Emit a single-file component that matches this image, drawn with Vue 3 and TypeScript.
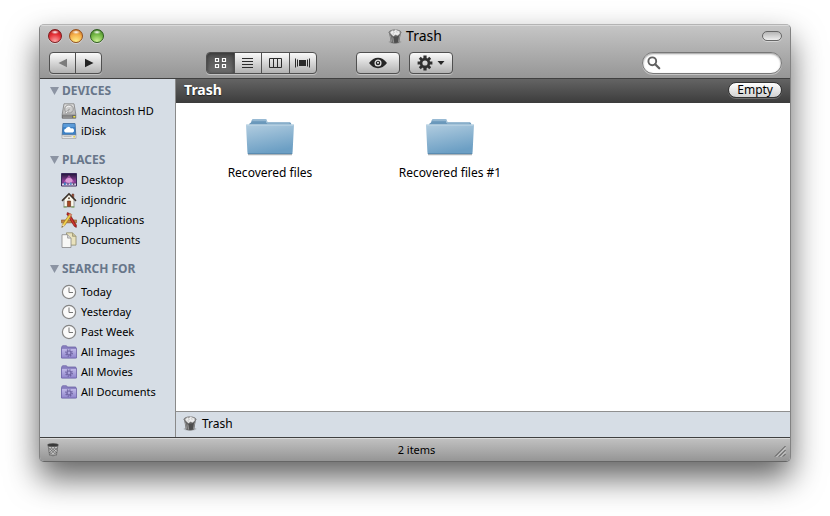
<script setup lang="ts">
import { computed, ref } from 'vue'

type IconName = 'drive' | 'idisk' | 'desktop' | 'home' | 'apps' | 'docs' | 'clock' | 'smart'

interface Place {
  label: string
  icon: IconName
}

interface Section {
  title: string
  spaced?: boolean
  places: Place[]
}

const sections: Section[] = [
  {
    title: 'DEVICES',
    places: [
      { label: 'Macintosh HD', icon: 'drive' },
      { label: 'iDisk', icon: 'idisk' },
    ],
  },
  {
    title: 'PLACES',
    places: [
      { label: 'Desktop', icon: 'desktop' },
      { label: 'idjondric', icon: 'home' },
      { label: 'Applications', icon: 'apps' },
      { label: 'Documents', icon: 'docs' },
    ],
  },
  {
    title: 'SEARCH FOR',
    spaced: true,
    places: [
      { label: 'Today', icon: 'clock' },
      { label: 'Yesterday', icon: 'clock' },
      { label: 'Past Week', icon: 'clock' },
      { label: 'All Images', icon: 'smart' },
      { label: 'All Movies', icon: 'smart' },
      { label: 'All Documents', icon: 'smart' },
    ],
  },
]

const views = ['Icons', 'List', 'Columns', 'Cover Flow'] as const
const activeView = ref<(typeof views)[number]>('Icons')
const closed = ref<string[]>([])
const query = ref('')
const files = ref<string[]>(['Recovered files', 'Recovered files #1'])

const shown = computed(() =>
  files.value.filter((name) => name.toLowerCase().includes(query.value.toLowerCase())),
)

function toggle(title: string): void {
  closed.value = closed.value.includes(title)
    ? closed.value.filter((t) => t !== title)
    : [...closed.value, title]
}
</script>

<template>
  <div class="desk">
    <svg class="defs" aria-hidden="true">
      <defs>
        <linearGradient id="folder-face" x1="0" y1="0" x2="0.3" y2="1">
          <stop offset="0" stop-color="#b2cde0" />
          <stop offset="1" stop-color="#6c9fc4" />
        </linearGradient>
        <linearGradient id="folder-back" x1="0" y1="0" x2="0" y2="1">
          <stop offset="0" stop-color="#8fb4d0" />
          <stop offset="0.4" stop-color="#6a98bb" />
        </linearGradient>
        <linearGradient id="smart-face" x1="0" y1="0" x2="0" y2="1">
          <stop offset="0" stop-color="#c4bdea" />
          <stop offset="1" stop-color="#8f84cc" />
        </linearGradient>
        <linearGradient id="drive-face" x1="0" y1="0" x2="0" y2="1">
          <stop offset="0" stop-color="#e4e4e4" />
          <stop offset="1" stop-color="#a2a2a2" />
        </linearGradient>
        <linearGradient id="space" x1="0" y1="0" x2="0" y2="1">
          <stop offset="0" stop-color="#1f1638" />
          <stop offset="0.6" stop-color="#8e3f98" />
          <stop offset="1" stop-color="#4b2a6c" />
        </linearGradient>
        <symbol id="trash-full" viewBox="0 0 14 15">
          <ellipse cx="7" cy="13" rx="6.5" ry="1.6" fill="#777" opacity=".35" />
          <path d="M1 3 2.800 13.400Q7 15.600 11.200 13.400L13 3Z" fill="#666" />
          <path d="M5 7.500Q7 8.200 9 7.500L12 6 10.800 12.500Q9 14 6.500 14Z" fill="#444" opacity=".7" />
          <path d="M2.400 6.500 3.600 12.800M4.800 8.500 5.500 13.500M11.600 6.500 10.500 12.800" stroke="#a5a5a5" stroke-width=".8" />
          <ellipse cx="7" cy="3.400" rx="6" ry="2.500" fill="#8c8c8c" stroke="#767676" />
          <path d="M2.200 3.500 4 1.400 6 2 7.800.5 9.400 1.800 11.200 2l.7 2.200-2 2.300-2.600-.7-1.900 1.500-2-2Z" fill="#ececec" stroke="#bbb" stroke-width=".4" />
          <path d="m5 2.800 1.600.7m1.600-1.200 1 1.400M4.500 4.800l1.500.4" stroke="#a5a5a5" stroke-width=".6" />
        </symbol>
      </defs>
    </svg>

    <main class="window">
      <header class="chrome">
        <div class="titlebar">
          <div class="lights">
            <button class="light red" aria-label="Close"></button>
            <button class="light amber" aria-label="Minimize"></button>
            <button class="light green" aria-label="Zoom"></button>
          </div>
          <h1 class="title">
            <svg class="trash" aria-hidden="true"><use href="#trash-full" /></svg>
            <span>Trash</span>
          </h1>
          <button class="pill" aria-label="Hide toolbar"></button>
        </div>

        <div class="tools">
          <div class="group nav">
            <button class="tool" aria-label="Back">
              <svg width="10" height="10" viewBox="0 0 10 10"><path d="M9 .8v8.4L.5 5Z" fill="#7c7c7c" /></svg>
            </button>
            <button class="tool" aria-label="Forward">
              <svg width="10" height="10" viewBox="0 0 10 10"><path d="M1 .8v8.4L9.5 5Z" fill="#222" /></svg>
            </button>
          </div>

          <div class="group views">
            <button
              v-for="view in views"
              :key="view"
              class="tool"
              :class="{ on: view === activeView }"
              :aria-label="view"
              :aria-pressed="view === activeView"
              @click="activeView = view"
            >
              <svg v-if="view === 'Icons'" width="13" height="12" viewBox="0 0 13 12" fill="none" stroke="currentColor" stroke-width="1.2">
                <path d="M1.5 1.5h3v3h-3ZM8.5 1.5h3v3h-3ZM1.5 7.5h3v3h-3ZM8.5 7.5h3v3h-3Z" />
              </svg>
              <svg v-else-if="view === 'List'" width="13" height="12" viewBox="0 0 13 12" stroke="currentColor">
                <path d="M1 1.5h11M1 4.5h11M1 7.5h11M1 10.5h11" />
              </svg>
              <svg v-else-if="view === 'Columns'" width="13" height="12" viewBox="0 0 13 12" fill="none" stroke="currentColor">
                <path d="M.5 1.5h12v9H.5ZM4.5 1v10M8.5 1v10" />
              </svg>
              <svg v-else width="15" height="12" viewBox="0 0 15 12" stroke="currentColor">
                <path d="M.5 1.5v9M2.5 2.5v7M12.5 2.5v7M14.5 1.5v9" />
                <path d="M4 3h7v6H4Z" fill="currentColor" stroke="none" />
              </svg>
            </button>
          </div>

          <div class="group single eye">
            <button class="tool" aria-label="Quick Look">
              <svg width="18" height="12" viewBox="0 0 18 12">
                <path d="M0 6Q4 .8 9 .8T18 6Q14 11.2 9 11.2T0 6Z" fill="#262626" />
                <circle cx="9" cy="6" r="2.900" fill="#262626" stroke="#e2e2e2" stroke-width="1.300" />
                <circle cx="9" cy="5.800" r="1" fill="#eee" />
              </svg>
            </button>
          </div>

          <div class="group single gear">
            <button class="tool" aria-label="Action" aria-haspopup="menu">
              <svg width="28" height="16" viewBox="0 0 28 16">
                <g stroke="#303030" stroke-width="3.2">
                  <path d="M8 .6V4M8 12v3.4M.6 8H4M12 8h3.4" />
                  <path d="m2.800 2.800 2.600 2.600m5.200 5.200 2.600 2.600m0-10.400-2.600 2.600m-5.200 5.200-2.600 2.600" stroke-width="2.800" />
                </g>
                <circle cx="8" cy="8" r="3.900" fill="none" stroke="#303030" stroke-width="2.600" />
                <path d="M20.500 6h7L24 10Z" fill="#262626" />
              </svg>
            </button>
          </div>

          <label class="search">
            <svg width="14" height="14" viewBox="0 0 14 14" aria-hidden="true">
              <circle cx="5.300" cy="5.300" r="3.900" fill="none" stroke="#626262" stroke-width="1.900" />
              <path d="m8.200 8.200 4 4" stroke="#626262" stroke-width="2.300" stroke-linecap="round" />
            </svg>
            <input v-model="query" type="text" aria-label="Search" />
          </label>
        </div>
      </header>

      <div class="body">
        <nav class="sidebar" aria-label="Places">
          <section v-for="section in sections" :key="section.title" class="section">
            <h2 class="heading">
              <button
                class="twist"
                :class="{ shut: closed.includes(section.title) }"
                :aria-expanded="!closed.includes(section.title)"
                @click="toggle(section.title)"
              >
                <svg width="9" height="8" viewBox="0 0 9 8" aria-hidden="true"><path d="M0 0h9L4.500 8Z" fill="#8c94a3" /></svg>
                <span>{{ section.title }}</span>
              </button>
            </h2>
            <ul v-if="!closed.includes(section.title)" class="places" :class="{ spaced: section.spaced }">
              <li v-for="place in section.places" :key="place.label">
                <a href="#" class="place">
                  <svg width="16" height="16" viewBox="0 0 16 16" aria-hidden="true">
                    <g v-if="place.icon === 'drive'">
                      <path d="M3 .8h10l1.800 10.500v3.900H1.200v-3.900Z" fill="url(#drive-face)" stroke="#7c7c7c" stroke-width=".8" />
                      <ellipse cx="8" cy="6" rx="4.300" ry="4" fill="#cdcdcd" stroke="#8b8b8b" stroke-width=".8" />
                      <path d="M5 4.500Q7 2.500 9.500 3.500" fill="none" stroke="#f6f6f6" />
                      <path d="M8.500 6 4 9.500l1.500 1.300Z" fill="#fff" stroke="#777" stroke-width=".5" />
                      <path d="M1.200 11.800h13.600v3.400H1.200Z" fill="#6e6e6e" />
                      <path d="M2 13h9M2 14.300h9" stroke="#b5b5b5" stroke-width=".6" />
                      <path d="M12.300 13h2v1.600h-2Z" fill="#f1e63c" />
                    </g>
                    <g v-else-if="place.icon === 'idisk'">
                      <path d="M2 .5h12l.8 11.500H1.200Z" fill="#3c82c8" stroke="#4d78a6" />
                      <path d="M2.500 1h11l.2 3H2.300Z" fill="#5b9bd8" />
                      <path d="M4.500 9.500a1.900 1.900 0 0 1 .2-3.700 2.800 2.800 0 0 1 5.200-.3 2 2 0 0 1 1.900 4Z" fill="#fff" />
                      <path d="M1 12h14v3.500H1Z" fill="#e6e6e6" stroke="#999" stroke-width=".6" />
                      <path d="M2.500 13.500h8" stroke="#bbb" />
                      <path d="M12.300 13h1.700v1.500h-1.700Z" fill="#e6d440" />
                    </g>
                    <g v-else-if="place.icon === 'desktop'">
                      <path d="M.5 1.500h15v12.500H.5Z" fill="url(#space)" stroke="#3a2a5c" />
                      <path d="M8 3 2.500 10.500h11Z" fill="#d877cf" opacity=".55" />
                      <ellipse cx="8" cy="8.500" rx="3.500" ry="2.500" fill="#f6c4f0" opacity=".6" />
                      <path d="M1 11.500h14v2H1Z" fill="#d9d5ea" />
                      <path d="M3 10.500h1.800v2.500H3Z" fill="#3d7cc0" />
                      <path d="M6.200 11h1.500v2H6.200Z" fill="#65599b" />
                      <path d="M9 10.500h1.600v2.500H9Z" fill="#5d8fc9" />
                      <path d="M12 11h1.300v2H12Z" fill="#5a5672" />
                    </g>
                    <g v-else-if="place.icon === 'home'">
                      <path d="M11 2h1.800v4H11Z" fill="#a44d35" stroke="#583429" stroke-width=".5" />
                      <path d="M3 7.500 8 2.600l5 4.900V14.800H3Z" fill="#fbf8ec" stroke="#777" stroke-width=".7" />
                      <path d="m1 8.900 7-7.100 7 7.100" fill="none" stroke="#3e342c" stroke-width="1.500" />
                      <path d="M6.400 9h3.200v5.600H6.400Z" fill="#a74722" stroke="#5d2c18" stroke-width=".6" />
                      <circle cx="8" cy="6.200" r="1" fill="#6c5a48" />
                      <path d="M2.500 15h3.200m4.600 0h3.200" stroke="#6c994d" stroke-width="1.100" />
                    </g>
                    <g v-else-if="place.icon === 'apps'">
                      <path d="M.3 8h15.400v2.800H.3Z" fill="#c08548" stroke="#85501f" stroke-width=".6" />
                      <path d="m6.300.6 2 .6 7.200 12-.2 2.300-2.100-1.200L5.900 2.200Z" fill="#b3201d" stroke="#6f1513" stroke-width=".5" />
                      <path d="m7 1.500 6.800 12" stroke="#e4574a" stroke-width=".6" />
                      <path d="m9 1.500 1.900 1.100L3.700 13.500.8 15.400l.7-3.100Z" fill="#f2d14b" stroke="#957426" stroke-width=".6" />
                      <path d="m9 1.500 1.900 1.100-1 1.500L8 3Z" fill="#d9777a" />
                      <path d="m1.500 12.300 2.200 1.200L.8 15.400Z" fill="#ecd9ae" />
                      <path d="m1.100 14-.3 1.400 1.200-.8Z" fill="#333" />
                    </g>
                    <g v-else-if="place.icon === 'docs'">
                      <path d="M5.500.8h6L15 4.300v8.800H5.500Z" fill="#e9e2bd" stroke="#918b6a" stroke-width=".8" />
                      <path d="M11.500.8v3.500H15" fill="#c6bf98" stroke="#918b6a" stroke-width=".7" />
                      <path d="M1 2.700h5.600L10 6.100v9.400H1Z" fill="#f8f8f6" stroke="#888" stroke-width=".8" />
                      <path d="M6.600 2.700v3.400H10" fill="#d9d9d9" stroke="#888" stroke-width=".7" />
                    </g>
                    <g v-else-if="place.icon === 'clock'">
                      <circle cx="8" cy="8" r="6.600" fill="#fafafa" stroke="#858585" stroke-width="1.200" />
                      <path d="M8 3.500V8.500h4" fill="none" stroke="#777" />
                    </g>
                    <g v-else>
                      <path d="M.7 13.800V3L1.500 1.800h4L6.400 3h8.300v10.800Z" fill="#8f85c6" stroke="#6d63a5" stroke-width=".8" />
                      <path d="M.5 4.200h15v9.800H.5Z" fill="url(#smart-face)" stroke="#6e64a9" stroke-width=".8" />
                      <circle cx="8" cy="9" r="2" fill="none" stroke="#6c619f" stroke-width="1.200" />
                      <circle cx="8" cy="9" r="3.200" fill="none" stroke="#6c619f" stroke-width="1.300" stroke-dasharray="1.300 1.213" />
                    </g>
                  </svg>
                  <span>{{ place.label }}</span>
                </a>
              </li>
            </ul>
          </section>
        </nav>

        <section class="content">
          <div class="banner">
            <h2>Trash</h2>
            <button class="empty" @click="files = []">Empty</button>
          </div>
          <ul class="files">
            <li v-for="name in shown" :key="name" class="file">
              <svg width="48" height="38" viewBox="0 0 48 38" aria-hidden="true">
                <path d="M2 36.500h44" stroke="#737f88" stroke-width="1.500" opacity=".6" />
                <path d="M3 6 5 4.500 5.800 2Q6.200 1 7.500 1h12Q20.800 1 21 2.500l.4 1.800H43.500Q45 4.300 45.300 6v3H3Z" fill="url(#folder-back)" />
                <path d="M6.300 2h14l.6 3H43.500" fill="none" stroke="#a7c5da" />
                <path d="M0 6.500H48L46.600 34q-.1 2-1.100 2H2.500q-1 0-1.100-2Z" fill="url(#folder-face)" />
                <path d="M.5 7H47.500" stroke="#c3d9e7" />
                <path d="M1.800 35.500h44.500" stroke="#5a8cb1" />
              </svg>
              <span>{{ name }}</span>
            </li>
          </ul>
          <div class="path">
            <svg class="trash" aria-hidden="true"><use href="#trash-full" /></svg>
            <span>Trash</span>
          </div>
        </section>
      </div>

      <footer class="status">
        <button class="bin" aria-label="Show trash">
          <svg width="12" height="14" viewBox="0 0 12 14">
            <path d="M1.200 3 2.500 12Q6 13.700 9.500 12L10.800 3Z" fill="#c4c4c4" stroke="#6a6a6a" stroke-width=".8" />
            <path d="m2 5 7.500 7M4 4.500l6 5.500M7 4.500l3.500 3M2.500 9 6 12.500M10 5l-7.500 7M8 4.500 2 10M5 4.500 1.800 7.500M9.500 9 6 12.500" stroke="#555" stroke-width=".6" />
            <ellipse cx="6" cy="2" rx="5.400" ry="1.500" fill="#383838" stroke="#555" stroke-width=".6" />
          </svg>
        </button>
        <span>{{ shown.length }} items</span>
        <svg class="grip" width="12" height="12" viewBox="0 0 12 12" aria-hidden="true">
          <path d="M1 11.500 11.500 1M5 11.500 11.500 5M9 11.500 11.500 9" stroke="#555" />
          <path d="M2.500 12 12 2.500M6.500 12 12 6.500" stroke="#ddd" stroke-width=".8" />
        </svg>
      </footer>
    </main>
  </div>
</template>

<style>
body {
  margin: 0;
  background: #fff;
}
</style>

<style scoped>
.desk {
  box-sizing: border-box;
  display: flex;
  min-height: 100vh;
  padding: 24px 39px 54px;
  overflow: hidden;
  font-family: "Noto Sans", "Open Sans", sans-serif;
  font-size: 12px;
  line-height: 20px;
  color: #000;
}
.defs {
  position: absolute;
  width: 0;
  height: 0;
}
button {
  margin: 0;
  padding: 0;
  border: 0;
  background: none;
  font: inherit;
  color: inherit;
}
h1,
h2,
ul {
  margin: 0;
  padding: 0;
  font: inherit;
  list-style: none;
}
svg {
  display: block;
  flex: none;
}
.window {
  flex: 1;
  display: flex;
  flex-direction: column;
  min-width: 0;
  overflow: hidden;
  border: 1px solid #828282;
  border-top-color: #b4b4b4;
  border-bottom-color: #666;
  border-radius: 5px;
  background: #d6dde5;
  box-shadow: 0 16px 32px rgba(0, 0, 0, 0.62);
}
.chrome {
  border-bottom: 1px solid #404040;
  background: linear-gradient(#c6c6c6, #969696);
  box-shadow: inset 0 1px #dadada;
}
.titlebar {
  display: grid;
  grid-template-columns: 1fr auto 1fr;
  align-items: center;
  height: 22px;
  padding: 0 8px;
}
.lights {
  display: flex;
  gap: 7px;
}
.light {
  width: 14px;
  height: 14px;
  border-radius: 50%;
  border: 1px solid;
  box-shadow: 0 1px rgba(255, 255, 255, 0.4);
}
.red {
  border-color: #7d1a1c;
  background: radial-gradient(ellipse 4px 2px at 50% 18%, #fff, transparent), radial-gradient(circle at 50% 95%, #ffa8a8, #e63238 55%, #a01218);
}
.amber {
  border-color: #95501c;
  background: radial-gradient(ellipse 4px 2px at 50% 18%, #fff, transparent), radial-gradient(circle at 50% 95%, #fff08a, #f6b04a 55%, #b8601e);
}
.green {
  border-color: #2c5c1c;
  background: radial-gradient(ellipse 4px 2px at 50% 18%, #fff, transparent), radial-gradient(circle at 50% 95%, #d0f59a, #74b845 55%, #3a7422);
}
.title {
  display: flex;
  align-items: center;
  gap: 4px;
  font-size: 14px;
}
.trash {
  width: 14px;
  height: 15px;
}
.pill {
  justify-self: end;
  width: 20px;
  height: 10px;
  border: 1px solid #666;
  border-radius: 5px;
  background: linear-gradient(#b5b5b5, #eee);
  box-shadow: 0 1px rgba(255, 255, 255, 0.4);
}
.tools {
  display: flex;
  align-items: center;
  height: 31px;
  padding: 1px 8px 0 9px;
  box-sizing: border-box;
}
.group {
  display: flex;
  box-sizing: border-box;
  height: 22px;
  border: 1px solid #505050;
  border-radius: 4px;
  background: linear-gradient(#fafafa, #b2b2b2);
  box-shadow: 0 1px rgba(255, 255, 255, 0.4);
  overflow: hidden;
}
.tool {
  flex: 1;
  display: flex;
  align-items: center;
  justify-content: center;
  color: #2b2b2b;
}
.tool + .tool {
  border-left: 1px solid #505050;
}
.tool.on {
  background: linear-gradient(#505050, #707070);
  box-shadow: inset 0 1px 4px #333;
  color: #fff;
}
.nav {
  width: 53px;
  margin-right: 104px;
}
.views {
  width: 111px;
  margin-right: 39px;
}
.single {
  width: 44px;
}
.gear {
  margin-left: 9px;
}
.search {
  display: flex;
  align-items: center;
  box-sizing: border-box;
  width: 140px;
  height: 22px;
  margin-left: auto;
  padding: 0 8px 0 4px;
  gap: 4px;
  border: 1px solid #777;
  border-radius: 11px;
  background: #fff;
  box-shadow: inset 0 1px 2px #999, 0 1px rgba(255, 255, 255, 0.4);
}
.search input {
  flex: 1;
  min-width: 0;
  padding: 0;
  border: 0;
  outline: 0;
  background: none;
  font: inherit;
}
.body {
  flex: 1;
  display: flex;
}
.sidebar {
  display: flex;
  flex-direction: column;
  gap: 9px;
  box-sizing: border-box;
  width: 136px;
  padding: 2px 0 8px;
  border-right: 1px solid #8a8a8a;
  font-size: 11px;
}
.heading {
  padding-left: 10px;
  font-size: 12px;
  font-weight: 700;
  color: #68768a;
  text-shadow: 0 1px #eef2f6;
}
.twist {
  display: flex;
  align-items: center;
  gap: 3px;
}
.twist.shut svg {
  transform: rotate(-90deg);
}
.spaced {
  padding-top: 3px;
}
.place {
  display: flex;
  align-items: center;
  gap: 4px;
  padding-left: 21px;
  color: #000;
  text-decoration: none;
  white-space: nowrap;
}
.content {
  flex: 1;
  display: flex;
  flex-direction: column;
  min-width: 0;
  background: #fff;
}
.banner {
  display: flex;
  align-items: center;
  justify-content: space-between;
  box-sizing: border-box;
  height: 24px;
  padding: 0 8px 2px;
  background: linear-gradient(#646464, #3c3c3c);
}
.banner h2 {
  font-size: 14px;
  font-weight: 700;
  color: #fff;
  text-shadow: 0 1px 1px #222;
}
.empty {
  box-sizing: border-box;
  height: 16px;
  padding: 0 8px;
  border: 1px solid #333;
  border-radius: 8px;
  background: linear-gradient(#fff, #d2d2d2);
  box-shadow: 0 1px #707070;
  line-height: 14px;
}
.files {
  flex: 1;
  display: flex;
  flex-wrap: wrap;
  align-content: flex-start;
  padding: 15px 4px;
}
.file {
  display: flex;
  flex-direction: column;
  align-items: center;
  gap: 7px;
  width: 180px;
}
.path {
  display: flex;
  align-items: center;
  gap: 5px;
  box-sizing: border-box;
  height: 26px;
  padding: 0 7px 2px;
  border-top: 1px solid #8f8f8f;
  background: #d6dde5;
}
.status {
  display: grid;
  grid-template-columns: 1fr auto 1fr;
  align-items: center;
  height: 23px;
  padding: 0 4px 0 7px;
  border-top: 1px solid #404040;
  background: linear-gradient(#c2c2c2, #959595);
  box-shadow: inset 0 1px #dadada;
  font-size: 11px;
}
.bin {
  justify-self: start;
}
.grip {
  justify-self: end;
  align-self: end;
  margin-bottom: 4px;
}
</style>
